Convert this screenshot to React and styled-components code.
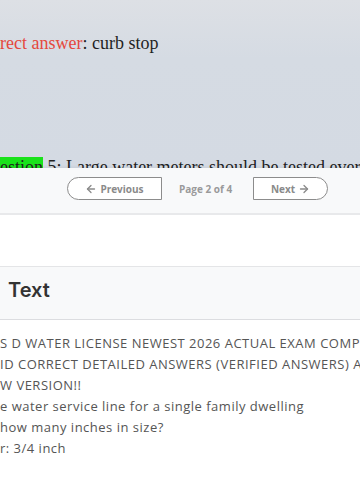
import styled, { createGlobalStyle } from "styled-components";
import { ArrowLeft, ArrowRight } from "lucide-react";

const lines = [
  "S D WATER LICENSE NEWEST 2026 ACTUAL EXAM COMPLETE",
  "ID CORRECT DETAILED ANSWERS (VERIFIED ANSWERS) ALREADY",
  "W VERSION!!",
  "e water service line for a single family dwelling",
  "how many inches in size?",
  "r: 3/4 inch",
];

export default function App() {
  return (
    <Page>
      <GlobalStyle />
      <Viewer>
        <DocLine>
          <Red>rect answer</Red>: curb stop
        </DocLine>
        <DocLine $gap={100}>
          <Mark>estion</Mark> 5: Large water meters should be tested every year
        </DocLine>
      </Viewer>
      <Pager>
        <PagerButton $side="left">
          <ArrowLeft size={12} strokeWidth={2.6} />
          Previous
        </PagerButton>
        <PageLabel>Page 2 of 4</PageLabel>
        <PagerButton $side="right">
          Next
          <ArrowRight size={12} strokeWidth={2.6} />
        </PagerButton>
      </Pager>
      <Spacer />
      <SectionHead>
        <SectionTitle>Text</SectionTitle>
      </SectionHead>
      <TextBody>
        {lines.map((l) => (
          <TextLine key={l}>{l}</TextLine>
        ))}
      </TextBody>
    </Page>
  );
}

const GlobalStyle = createGlobalStyle`
  html, body {
    margin: 0;
    padding: 0;
    background: #ffffff;
    overflow: hidden;
  }
`;

const Page = styled.div`
  width: 360px;
  height: 480px;
  overflow: hidden;
  display: flex;
  flex-direction: column;
  background: #fff;
`;

const Viewer = styled.div`
  height: 168px;
  flex-shrink: 0;
  overflow: hidden;
  padding-top: 31px;
  box-sizing: border-box;
  background: linear-gradient(180deg, #dde0e5 0%, #d5dbe3 35%, #d4dae3 100%);
`;

const DocLine = styled.div`
  font-family: "Liberation Serif", "Times New Roman", serif;
  font-size: 18px;
  line-height: 24px;
  color: #1f1f1f;
  white-space: nowrap;
  margin-top: ${(p) => p.$gap || 0}px;
`;

const Red = styled.span`
  color: #e5483d;
`;

const Mark = styled.span`
  background: #19e21b;
  color: #1f1f1f;
`;

const Pager = styled.div`
  height: 47px;
  flex-shrink: 0;
  box-sizing: border-box;
  display: flex;
  align-items: center;
  gap: 17px;
  padding: 0 0 4px 67px;
  background: #f8f9fa;
  border-bottom: 2px solid #e8e9eb;
  box-shadow: 0 -1px 3px rgba(0, 0, 0, 0.06);
`;

const PagerButton = styled.div`
  height: 23px;
  box-sizing: border-box;
  display: flex;
  align-items: center;
  justify-content: center;
  gap: 3px;
  width: ${(p) => (p.$side === "left" ? 95 : 75)}px;
  border: 1px solid #8c8c8c;
  border-radius: ${(p) => (p.$side === "left" ? "12px 0 0 12px" : "0 12px 12px 0")};
  background: #fff;
  color: #8a8a8a;
  font-family: "Open Sans", sans-serif;
  font-size: 10px;
  font-weight: 700;
`;

const PageLabel = styled.div`
  width: 57px;
  font-family: "Open Sans", sans-serif;
  font-size: 10px;
  font-weight: 700;
  color: #9a9a9a;
  white-space: nowrap;
`;

const Spacer = styled.div`
  height: 51px;
  flex-shrink: 0;
  background: #fff;
`;

const SectionHead = styled.div`
  height: 54px;
  flex-shrink: 0;
  box-sizing: border-box;
  display: flex;
  align-items: center;
  padding-left: 8px;
  background: #f8f9fa;
  border-top: 1px solid #e4e5e7;
  border-bottom: 1px solid #dcdde0;
`;

const SectionTitle = styled.div`
  font-family: Inter, "Open Sans", sans-serif;
  font-size: 20px;
  font-weight: 600;
  color: #333;
  margin-top: -6px;
`;

const TextBody = styled.div`
  padding-top: 13px;
`;

const TextLine = styled.div`
  font-family: "Open Sans", sans-serif;
  font-size: 13px;
  line-height: 21px;
  letter-spacing: 0.5px;
  color: #555;
  white-space: nowrap;
`;
